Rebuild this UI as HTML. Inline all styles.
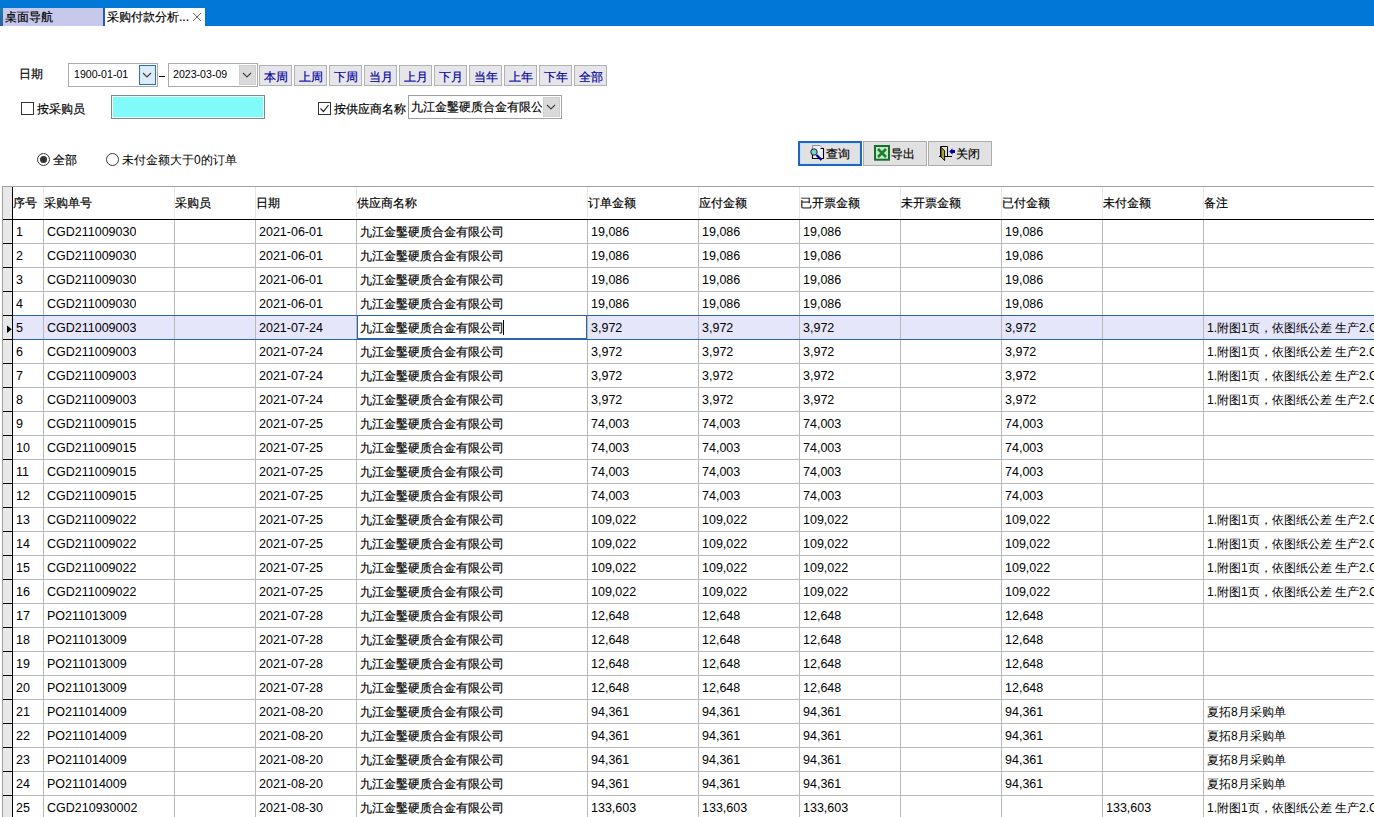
<!DOCTYPE html><html><head><meta charset="utf-8"><style>
*{box-sizing:border-box}
html,body{margin:0;padding:0;width:1374px;height:817px;overflow:hidden;background:#fff;font-family:"Liberation Sans",sans-serif;font-size:12px;color:#000}
.a{position:absolute}
.t{position:absolute;white-space:nowrap;line-height:14px;font-size:12px}
.btn{position:absolute;top:65px;width:33px;height:21px;background:#e5e5ea;border:1px solid #b2b2b2;color:#00009c;font-size:12px;line-height:22px;text-align:center}
.cb{position:absolute;width:13px;height:13px;border:1px solid #333;background:#fff}
.dp{position:absolute;top:63px;width:90px;height:24px;border:1px solid #ababab;background:#fff}
.hl{position:absolute;left:3px;width:1371px;height:1px;background:#b9b9b9}
.il{position:absolute;left:3px;width:9px;height:1px;background:#000}
.vl{position:absolute;top:220px;width:1px;height:597px;background:#b9b9b9}
.hv{position:absolute;top:187px;width:1px;height:32px;background:#e6e6e6}
.c{position:absolute;white-space:nowrap;line-height:14px;font-size:12px;color:#000;overflow:hidden}
.h{position:absolute;white-space:nowrap;line-height:14px;font-size:12px;color:#000;top:196px}
.b2{position:absolute;top:141px;height:25px;background:#e1e1e1;border:1px solid #adadad}
</style></head><body>
<div class="a" style="left:0;top:0;width:1374px;height:26px;background:#0078d7"></div>
<div class="a" style="left:0;top:8px;width:3px;height:18px;background:linear-gradient(#1f7fa8,#2d5fa4)"></div>
<div class="a" style="left:3px;top:8px;width:100px;height:18px;background:#c6c8ec"></div>
<div class="a" style="left:103px;top:8px;width:2px;height:18px;background:#1c5fa8"></div>
<div class="a" style="left:105px;top:8px;width:100px;height:18px;background:#fff"></div>
<div class="t" style="-webkit-text-stroke:0.18px currentColor;left:5px;top:10px">桌面导航</div>
<div class="t" style="-webkit-text-stroke:0.18px currentColor;left:107px;top:10px">采购付款分析...</div>
<svg class="a" style="left:192px;top:12px" width="10" height="10"><path d="M1 1L9 9M9 1L1 9" stroke="#666" stroke-width="1"/></svg>
<div class="t" style="-webkit-text-stroke:0.18px currentColor;left:19px;top:67px">日期</div>
<div class="dp" style="left:68px"></div>
<div class="t" style="left:74px;top:67px;font-size:10.6px">1900-01-01</div>
<div class="a" style="left:139px;top:65px;width:17px;height:20px;border:1px solid #2a6cc0;background:#dcecfa"></div>
<svg class="a" style="left:139px;top:66px" width="17" height="18"><path d="M4 7L8 11L12 7" fill="none" stroke="#444" stroke-width="1.2"/></svg>
<div class="a" style="left:159px;top:76px;width:6px;height:1px;background:#000"></div>
<div class="dp" style="left:168px"></div>
<div class="t" style="left:173px;top:67px;font-size:10.6px">2023-03-09</div>
<div class="a" style="left:239px;top:65px;width:17px;height:20px;border:1px solid #cfcfcf;background:#dadada"></div>
<svg class="a" style="left:239px;top:66px" width="17" height="18"><path d="M4 7L8 11L12 7" fill="none" stroke="#444" stroke-width="1.2"/></svg>
<div class="btn" style="-webkit-text-stroke:0.18px currentColor;left:259px">本周</div>
<div class="btn" style="-webkit-text-stroke:0.18px currentColor;left:294px">上周</div>
<div class="btn" style="-webkit-text-stroke:0.18px currentColor;left:329px">下周</div>
<div class="btn" style="-webkit-text-stroke:0.18px currentColor;left:364px">当月</div>
<div class="btn" style="-webkit-text-stroke:0.18px currentColor;left:399px">上月</div>
<div class="btn" style="-webkit-text-stroke:0.18px currentColor;left:434px">下月</div>
<div class="btn" style="-webkit-text-stroke:0.18px currentColor;left:469px">当年</div>
<div class="btn" style="-webkit-text-stroke:0.18px currentColor;left:504px">上年</div>
<div class="btn" style="-webkit-text-stroke:0.18px currentColor;left:539px">下年</div>
<div class="btn" style="-webkit-text-stroke:0.18px currentColor;left:574px">全部</div>
<div class="cb" style="left:21px;top:102px"></div>
<div class="t" style="-webkit-text-stroke:0.18px currentColor;left:37px;top:102px">按采购员</div>
<div class="a" style="left:111px;top:95px;width:154px;height:24px;border:1px solid #7d8a94;background:#80fafa;box-shadow:inset 0 0 0 1px #f4ffff"></div>
<div class="cb" style="left:318px;top:102px"></div>
<svg class="a" style="left:318px;top:102px" width="13" height="13"><path d="M2.5 6.5L5.5 9.5L10.5 3" fill="none" stroke="#222" stroke-width="1.2"/></svg>
<div class="t" style="-webkit-text-stroke:0.18px currentColor;left:334px;top:102px">按供应商名称</div>
<div class="a" style="left:408px;top:95px;width:154px;height:24px;border:1px solid #a0a0a0;background:#fff"></div>
<div class="c" style="-webkit-text-stroke:0.18px currentColor;left:411px;top:100px;width:131px">九江金鑿硬质合金有限公司</div>
<div class="a" style="left:543px;top:97px;width:17px;height:20px;border:1px solid #cfcfcf;background:#dadada"></div>
<svg class="a" style="left:543px;top:98px" width="17" height="18"><path d="M4 7L8 11L12 7" fill="none" stroke="#444" stroke-width="1.2"/></svg>
<svg class="a" style="left:36px;top:152px" width="15" height="15"><circle cx="7.5" cy="7.5" r="6" fill="#fff" stroke="#333" stroke-width="1"/><circle cx="7.5" cy="7.5" r="3.5" fill="#333"/></svg>
<div class="t" style="-webkit-text-stroke:0.18px currentColor;left:53px;top:153px">全部</div>
<svg class="a" style="left:105px;top:152px" width="15" height="15"><circle cx="7.5" cy="7.5" r="6" fill="#fff" stroke="#333" stroke-width="1"/></svg>
<div class="t" style="left:122px;top:153px">未付金额大于0的订单</div>
<div class="b2" style="left:798px;width:64px;border:2px solid #1f66bd;box-shadow:inset 0 0 0 1px #bfe0fb"></div>
<div class="b2" style="left:863px;width:64px"></div>
<div class="b2" style="left:928px;width:64px"></div>
<svg class="a" style="left:806px;top:142px" width="22" height="22"><path d="M6.5 3.5H14L17.5 7V16.5H6.5Z" fill="#eeeefa" stroke="#888" stroke-width="0.9"/><path d="M14.5 6.5H17.5V16.5H6.5V13" fill="none" stroke="#000" stroke-width="1.1"/><path d="M10.5 13L15.5 18" stroke="#0000a8" stroke-width="2.3"/><circle cx="8" cy="10" r="3.2" fill="#72d8c6" stroke="#111" stroke-width="0.9"/></svg>
<div class="t" style="-webkit-text-stroke:0.18px currentColor;left:826px;top:147px">查询</div>
<svg class="a" style="left:871px;top:142px" width="22" height="22"><rect x="4" y="4" width="14" height="13.7" fill="#bdf0bd" stroke="#1d6b30" stroke-width="2"/><path d="M7 7L15 15M15 7L7 15" stroke="#247a38" stroke-width="2.6"/></svg>
<div class="t" style="-webkit-text-stroke:0.18px currentColor;left:891px;top:147px">导出</div>
<svg class="a" style="left:936px;top:142px" width="22" height="22"><path d="M4.5 14.5V4.5H11.5V14.5" fill="none" stroke="#000" stroke-width="1"/><path d="M3 14.5H16" stroke="#000" stroke-width="1"/><path d="M5 5.5L8.6 8.5V18.5L5 15Z" fill="#a4a432" stroke="#000" stroke-width="0.9"/><path d="M13.2 9.5L16.5 6.2V8H19V11H16.5V12.8Z" fill="#0000b0"/></svg>
<div class="t" style="-webkit-text-stroke:0.18px currentColor;left:956px;top:147px">关闭</div>
<div class="a" style="left:2px;top:186px;width:1372px;height:1px;background:#a0a0a0"></div>
<div class="a" style="left:2px;top:186px;width:1px;height:631px;background:#a0a0a0"></div>
<div class="a" style="left:3px;top:187px;width:9px;height:630px;background:#e8e8e8"></div>
<div class="a" style="left:13px;top:315px;width:1361px;height:24px;background:#e6e6fa"></div>
<div class="hv" style="left:43px"></div>
<div class="hv" style="left:174px"></div>
<div class="hv" style="left:255px"></div>
<div class="hv" style="left:356px"></div>
<div class="hv" style="left:587px"></div>
<div class="hv" style="left:698px"></div>
<div class="hv" style="left:799px"></div>
<div class="hv" style="left:900px"></div>
<div class="hv" style="left:1001px"></div>
<div class="hv" style="left:1102px"></div>
<div class="hv" style="left:1203px"></div>
<div class="vl" style="left:43px"></div>
<div class="vl" style="left:174px"></div>
<div class="vl" style="left:255px"></div>
<div class="vl" style="left:356px"></div>
<div class="vl" style="left:587px"></div>
<div class="vl" style="left:698px"></div>
<div class="vl" style="left:799px"></div>
<div class="vl" style="left:900px"></div>
<div class="vl" style="left:1001px"></div>
<div class="vl" style="left:1102px"></div>
<div class="vl" style="left:1203px"></div>
<div class="hl" style="left:13px;top:243px"></div>
<div class="hl" style="left:13px;top:267px"></div>
<div class="hl" style="left:13px;top:291px"></div>
<div class="hl" style="left:13px;top:315px"></div>
<div class="hl" style="left:13px;top:339px"></div>
<div class="hl" style="left:13px;top:363px"></div>
<div class="hl" style="left:13px;top:387px"></div>
<div class="hl" style="left:13px;top:411px"></div>
<div class="hl" style="left:13px;top:435px"></div>
<div class="hl" style="left:13px;top:459px"></div>
<div class="hl" style="left:13px;top:483px"></div>
<div class="hl" style="left:13px;top:507px"></div>
<div class="hl" style="left:13px;top:531px"></div>
<div class="hl" style="left:13px;top:555px"></div>
<div class="hl" style="left:13px;top:579px"></div>
<div class="hl" style="left:13px;top:603px"></div>
<div class="hl" style="left:13px;top:627px"></div>
<div class="hl" style="left:13px;top:651px"></div>
<div class="hl" style="left:13px;top:675px"></div>
<div class="hl" style="left:13px;top:699px"></div>
<div class="hl" style="left:13px;top:723px"></div>
<div class="hl" style="left:13px;top:747px"></div>
<div class="hl" style="left:13px;top:771px"></div>
<div class="hl" style="left:13px;top:795px"></div>
<div class="il" style="top:219px"></div>
<div class="il" style="top:243px"></div>
<div class="il" style="top:267px"></div>
<div class="il" style="top:291px"></div>
<div class="il" style="top:315px"></div>
<div class="il" style="top:339px"></div>
<div class="il" style="top:363px"></div>
<div class="il" style="top:387px"></div>
<div class="il" style="top:411px"></div>
<div class="il" style="top:435px"></div>
<div class="il" style="top:459px"></div>
<div class="il" style="top:483px"></div>
<div class="il" style="top:507px"></div>
<div class="il" style="top:531px"></div>
<div class="il" style="top:555px"></div>
<div class="il" style="top:579px"></div>
<div class="il" style="top:603px"></div>
<div class="il" style="top:627px"></div>
<div class="il" style="top:651px"></div>
<div class="il" style="top:675px"></div>
<div class="il" style="top:699px"></div>
<div class="il" style="top:723px"></div>
<div class="il" style="top:747px"></div>
<div class="il" style="top:771px"></div>
<div class="il" style="top:795px"></div>
<div class="a" style="left:12px;top:219px;width:1362px;height:1px;background:#000"></div>
<div class="a" style="left:12px;top:187px;width:1px;height:630px;background:#000"></div>
<div class="a" style="left:13px;top:315px;width:1361px;height:1px;background:#2a66b0"></div>
<div class="a" style="left:13px;top:339px;width:1361px;height:1px;background:#2a66b0"></div>
<div class="a" style="left:357px;top:315px;width:230px;height:24px;border:1px solid #2a66b0;background:#fff"></div>
<div class="a" style="left:503px;top:320px;width:1px;height:15px;background:#000"></div>
<svg class="a" style="left:6px;top:325px" width="7" height="9"><path d="M1 0.5L5.8 4.2L1 7.9Z" fill="#000"/></svg>
<div class="h" style="-webkit-text-stroke:0.18px currentColor;left:13px">序号</div>
<div class="h" style="-webkit-text-stroke:0.18px currentColor;left:44px">采购单号</div>
<div class="h" style="-webkit-text-stroke:0.18px currentColor;left:175px">采购员</div>
<div class="h" style="-webkit-text-stroke:0.18px currentColor;left:256px">日期</div>
<div class="h" style="-webkit-text-stroke:0.18px currentColor;left:357px">供应商名称</div>
<div class="h" style="-webkit-text-stroke:0.18px currentColor;left:588px">订单金额</div>
<div class="h" style="-webkit-text-stroke:0.18px currentColor;left:699px">应付金额</div>
<div class="h" style="-webkit-text-stroke:0.18px currentColor;left:800px">已开票金额</div>
<div class="h" style="-webkit-text-stroke:0.18px currentColor;left:901px">未开票金额</div>
<div class="h" style="-webkit-text-stroke:0.18px currentColor;left:1002px">已付金额</div>
<div class="h" style="-webkit-text-stroke:0.18px currentColor;left:1103px">未付金额</div>
<div class="h" style="-webkit-text-stroke:0.18px currentColor;left:1204px">备注</div>
<div class="c" style="left:16px;top:225px;max-width:26px;font-size:12.5px">1</div>
<div class="c" style="left:47px;top:225px;max-width:126px;font-size:12.5px">CGD211009030</div>
<div class="c" style="left:259px;top:225px;max-width:96px;font-size:12.5px">2021-06-01</div>
<div class="c" style="-webkit-text-stroke:0.18px currentColor;left:360px;top:225px;max-width:226px;font-size:12px">九江金鑿硬质合金有限公司</div>
<div class="c" style="left:591px;top:225px;max-width:106px;font-size:12.5px">19,086</div>
<div class="c" style="left:702px;top:225px;max-width:96px;font-size:12.5px">19,086</div>
<div class="c" style="left:803px;top:225px;max-width:96px;font-size:12.5px">19,086</div>
<div class="c" style="left:1005px;top:225px;max-width:96px;font-size:12.5px">19,086</div>
<div class="c" style="left:16px;top:249px;max-width:26px;font-size:12.5px">2</div>
<div class="c" style="left:47px;top:249px;max-width:126px;font-size:12.5px">CGD211009030</div>
<div class="c" style="left:259px;top:249px;max-width:96px;font-size:12.5px">2021-06-01</div>
<div class="c" style="-webkit-text-stroke:0.18px currentColor;left:360px;top:249px;max-width:226px;font-size:12px">九江金鑿硬质合金有限公司</div>
<div class="c" style="left:591px;top:249px;max-width:106px;font-size:12.5px">19,086</div>
<div class="c" style="left:702px;top:249px;max-width:96px;font-size:12.5px">19,086</div>
<div class="c" style="left:803px;top:249px;max-width:96px;font-size:12.5px">19,086</div>
<div class="c" style="left:1005px;top:249px;max-width:96px;font-size:12.5px">19,086</div>
<div class="c" style="left:16px;top:273px;max-width:26px;font-size:12.5px">3</div>
<div class="c" style="left:47px;top:273px;max-width:126px;font-size:12.5px">CGD211009030</div>
<div class="c" style="left:259px;top:273px;max-width:96px;font-size:12.5px">2021-06-01</div>
<div class="c" style="-webkit-text-stroke:0.18px currentColor;left:360px;top:273px;max-width:226px;font-size:12px">九江金鑿硬质合金有限公司</div>
<div class="c" style="left:591px;top:273px;max-width:106px;font-size:12.5px">19,086</div>
<div class="c" style="left:702px;top:273px;max-width:96px;font-size:12.5px">19,086</div>
<div class="c" style="left:803px;top:273px;max-width:96px;font-size:12.5px">19,086</div>
<div class="c" style="left:1005px;top:273px;max-width:96px;font-size:12.5px">19,086</div>
<div class="c" style="left:16px;top:297px;max-width:26px;font-size:12.5px">4</div>
<div class="c" style="left:47px;top:297px;max-width:126px;font-size:12.5px">CGD211009030</div>
<div class="c" style="left:259px;top:297px;max-width:96px;font-size:12.5px">2021-06-01</div>
<div class="c" style="-webkit-text-stroke:0.18px currentColor;left:360px;top:297px;max-width:226px;font-size:12px">九江金鑿硬质合金有限公司</div>
<div class="c" style="left:591px;top:297px;max-width:106px;font-size:12.5px">19,086</div>
<div class="c" style="left:702px;top:297px;max-width:96px;font-size:12.5px">19,086</div>
<div class="c" style="left:803px;top:297px;max-width:96px;font-size:12.5px">19,086</div>
<div class="c" style="left:1005px;top:297px;max-width:96px;font-size:12.5px">19,086</div>
<div class="c" style="left:16px;top:321px;max-width:26px;font-size:12.5px">5</div>
<div class="c" style="left:47px;top:321px;max-width:126px;font-size:12.5px">CGD211009003</div>
<div class="c" style="left:259px;top:321px;max-width:96px;font-size:12.5px">2021-07-24</div>
<div class="c" style="-webkit-text-stroke:0.18px currentColor;left:360px;top:321px;max-width:226px;font-size:12px">九江金鑿硬质合金有限公司</div>
<div class="c" style="left:591px;top:321px;max-width:106px;font-size:12.5px">3,972</div>
<div class="c" style="left:702px;top:321px;max-width:96px;font-size:12.5px">3,972</div>
<div class="c" style="left:803px;top:321px;max-width:96px;font-size:12.5px">3,972</div>
<div class="c" style="left:1005px;top:321px;max-width:96px;font-size:12.5px">3,972</div>
<div class="c" style="left:1207px;top:321px;max-width:192px;font-size:12px">1.附图1页，依图纸公差 生产2.GB</div>
<div class="c" style="left:16px;top:345px;max-width:26px;font-size:12.5px">6</div>
<div class="c" style="left:47px;top:345px;max-width:126px;font-size:12.5px">CGD211009003</div>
<div class="c" style="left:259px;top:345px;max-width:96px;font-size:12.5px">2021-07-24</div>
<div class="c" style="-webkit-text-stroke:0.18px currentColor;left:360px;top:345px;max-width:226px;font-size:12px">九江金鑿硬质合金有限公司</div>
<div class="c" style="left:591px;top:345px;max-width:106px;font-size:12.5px">3,972</div>
<div class="c" style="left:702px;top:345px;max-width:96px;font-size:12.5px">3,972</div>
<div class="c" style="left:803px;top:345px;max-width:96px;font-size:12.5px">3,972</div>
<div class="c" style="left:1005px;top:345px;max-width:96px;font-size:12.5px">3,972</div>
<div class="c" style="left:1207px;top:345px;max-width:192px;font-size:12px">1.附图1页，依图纸公差 生产2.GB</div>
<div class="c" style="left:16px;top:369px;max-width:26px;font-size:12.5px">7</div>
<div class="c" style="left:47px;top:369px;max-width:126px;font-size:12.5px">CGD211009003</div>
<div class="c" style="left:259px;top:369px;max-width:96px;font-size:12.5px">2021-07-24</div>
<div class="c" style="-webkit-text-stroke:0.18px currentColor;left:360px;top:369px;max-width:226px;font-size:12px">九江金鑿硬质合金有限公司</div>
<div class="c" style="left:591px;top:369px;max-width:106px;font-size:12.5px">3,972</div>
<div class="c" style="left:702px;top:369px;max-width:96px;font-size:12.5px">3,972</div>
<div class="c" style="left:803px;top:369px;max-width:96px;font-size:12.5px">3,972</div>
<div class="c" style="left:1005px;top:369px;max-width:96px;font-size:12.5px">3,972</div>
<div class="c" style="left:1207px;top:369px;max-width:192px;font-size:12px">1.附图1页，依图纸公差 生产2.GB</div>
<div class="c" style="left:16px;top:393px;max-width:26px;font-size:12.5px">8</div>
<div class="c" style="left:47px;top:393px;max-width:126px;font-size:12.5px">CGD211009003</div>
<div class="c" style="left:259px;top:393px;max-width:96px;font-size:12.5px">2021-07-24</div>
<div class="c" style="-webkit-text-stroke:0.18px currentColor;left:360px;top:393px;max-width:226px;font-size:12px">九江金鑿硬质合金有限公司</div>
<div class="c" style="left:591px;top:393px;max-width:106px;font-size:12.5px">3,972</div>
<div class="c" style="left:702px;top:393px;max-width:96px;font-size:12.5px">3,972</div>
<div class="c" style="left:803px;top:393px;max-width:96px;font-size:12.5px">3,972</div>
<div class="c" style="left:1005px;top:393px;max-width:96px;font-size:12.5px">3,972</div>
<div class="c" style="left:1207px;top:393px;max-width:192px;font-size:12px">1.附图1页，依图纸公差 生产2.GB</div>
<div class="c" style="left:16px;top:417px;max-width:26px;font-size:12.5px">9</div>
<div class="c" style="left:47px;top:417px;max-width:126px;font-size:12.5px">CGD211009015</div>
<div class="c" style="left:259px;top:417px;max-width:96px;font-size:12.5px">2021-07-25</div>
<div class="c" style="-webkit-text-stroke:0.18px currentColor;left:360px;top:417px;max-width:226px;font-size:12px">九江金鑿硬质合金有限公司</div>
<div class="c" style="left:591px;top:417px;max-width:106px;font-size:12.5px">74,003</div>
<div class="c" style="left:702px;top:417px;max-width:96px;font-size:12.5px">74,003</div>
<div class="c" style="left:803px;top:417px;max-width:96px;font-size:12.5px">74,003</div>
<div class="c" style="left:1005px;top:417px;max-width:96px;font-size:12.5px">74,003</div>
<div class="c" style="left:16px;top:441px;max-width:26px;font-size:12.5px">10</div>
<div class="c" style="left:47px;top:441px;max-width:126px;font-size:12.5px">CGD211009015</div>
<div class="c" style="left:259px;top:441px;max-width:96px;font-size:12.5px">2021-07-25</div>
<div class="c" style="-webkit-text-stroke:0.18px currentColor;left:360px;top:441px;max-width:226px;font-size:12px">九江金鑿硬质合金有限公司</div>
<div class="c" style="left:591px;top:441px;max-width:106px;font-size:12.5px">74,003</div>
<div class="c" style="left:702px;top:441px;max-width:96px;font-size:12.5px">74,003</div>
<div class="c" style="left:803px;top:441px;max-width:96px;font-size:12.5px">74,003</div>
<div class="c" style="left:1005px;top:441px;max-width:96px;font-size:12.5px">74,003</div>
<div class="c" style="left:16px;top:465px;max-width:26px;font-size:12.5px">11</div>
<div class="c" style="left:47px;top:465px;max-width:126px;font-size:12.5px">CGD211009015</div>
<div class="c" style="left:259px;top:465px;max-width:96px;font-size:12.5px">2021-07-25</div>
<div class="c" style="-webkit-text-stroke:0.18px currentColor;left:360px;top:465px;max-width:226px;font-size:12px">九江金鑿硬质合金有限公司</div>
<div class="c" style="left:591px;top:465px;max-width:106px;font-size:12.5px">74,003</div>
<div class="c" style="left:702px;top:465px;max-width:96px;font-size:12.5px">74,003</div>
<div class="c" style="left:803px;top:465px;max-width:96px;font-size:12.5px">74,003</div>
<div class="c" style="left:1005px;top:465px;max-width:96px;font-size:12.5px">74,003</div>
<div class="c" style="left:16px;top:489px;max-width:26px;font-size:12.5px">12</div>
<div class="c" style="left:47px;top:489px;max-width:126px;font-size:12.5px">CGD211009015</div>
<div class="c" style="left:259px;top:489px;max-width:96px;font-size:12.5px">2021-07-25</div>
<div class="c" style="-webkit-text-stroke:0.18px currentColor;left:360px;top:489px;max-width:226px;font-size:12px">九江金鑿硬质合金有限公司</div>
<div class="c" style="left:591px;top:489px;max-width:106px;font-size:12.5px">74,003</div>
<div class="c" style="left:702px;top:489px;max-width:96px;font-size:12.5px">74,003</div>
<div class="c" style="left:803px;top:489px;max-width:96px;font-size:12.5px">74,003</div>
<div class="c" style="left:1005px;top:489px;max-width:96px;font-size:12.5px">74,003</div>
<div class="c" style="left:16px;top:513px;max-width:26px;font-size:12.5px">13</div>
<div class="c" style="left:47px;top:513px;max-width:126px;font-size:12.5px">CGD211009022</div>
<div class="c" style="left:259px;top:513px;max-width:96px;font-size:12.5px">2021-07-25</div>
<div class="c" style="-webkit-text-stroke:0.18px currentColor;left:360px;top:513px;max-width:226px;font-size:12px">九江金鑿硬质合金有限公司</div>
<div class="c" style="left:591px;top:513px;max-width:106px;font-size:12.5px">109,022</div>
<div class="c" style="left:702px;top:513px;max-width:96px;font-size:12.5px">109,022</div>
<div class="c" style="left:803px;top:513px;max-width:96px;font-size:12.5px">109,022</div>
<div class="c" style="left:1005px;top:513px;max-width:96px;font-size:12.5px">109,022</div>
<div class="c" style="left:1207px;top:513px;max-width:192px;font-size:12px">1.附图1页，依图纸公差 生产2.GB</div>
<div class="c" style="left:16px;top:537px;max-width:26px;font-size:12.5px">14</div>
<div class="c" style="left:47px;top:537px;max-width:126px;font-size:12.5px">CGD211009022</div>
<div class="c" style="left:259px;top:537px;max-width:96px;font-size:12.5px">2021-07-25</div>
<div class="c" style="-webkit-text-stroke:0.18px currentColor;left:360px;top:537px;max-width:226px;font-size:12px">九江金鑿硬质合金有限公司</div>
<div class="c" style="left:591px;top:537px;max-width:106px;font-size:12.5px">109,022</div>
<div class="c" style="left:702px;top:537px;max-width:96px;font-size:12.5px">109,022</div>
<div class="c" style="left:803px;top:537px;max-width:96px;font-size:12.5px">109,022</div>
<div class="c" style="left:1005px;top:537px;max-width:96px;font-size:12.5px">109,022</div>
<div class="c" style="left:1207px;top:537px;max-width:192px;font-size:12px">1.附图1页，依图纸公差 生产2.GB</div>
<div class="c" style="left:16px;top:561px;max-width:26px;font-size:12.5px">15</div>
<div class="c" style="left:47px;top:561px;max-width:126px;font-size:12.5px">CGD211009022</div>
<div class="c" style="left:259px;top:561px;max-width:96px;font-size:12.5px">2021-07-25</div>
<div class="c" style="-webkit-text-stroke:0.18px currentColor;left:360px;top:561px;max-width:226px;font-size:12px">九江金鑿硬质合金有限公司</div>
<div class="c" style="left:591px;top:561px;max-width:106px;font-size:12.5px">109,022</div>
<div class="c" style="left:702px;top:561px;max-width:96px;font-size:12.5px">109,022</div>
<div class="c" style="left:803px;top:561px;max-width:96px;font-size:12.5px">109,022</div>
<div class="c" style="left:1005px;top:561px;max-width:96px;font-size:12.5px">109,022</div>
<div class="c" style="left:1207px;top:561px;max-width:192px;font-size:12px">1.附图1页，依图纸公差 生产2.GB</div>
<div class="c" style="left:16px;top:585px;max-width:26px;font-size:12.5px">16</div>
<div class="c" style="left:47px;top:585px;max-width:126px;font-size:12.5px">CGD211009022</div>
<div class="c" style="left:259px;top:585px;max-width:96px;font-size:12.5px">2021-07-25</div>
<div class="c" style="-webkit-text-stroke:0.18px currentColor;left:360px;top:585px;max-width:226px;font-size:12px">九江金鑿硬质合金有限公司</div>
<div class="c" style="left:591px;top:585px;max-width:106px;font-size:12.5px">109,022</div>
<div class="c" style="left:702px;top:585px;max-width:96px;font-size:12.5px">109,022</div>
<div class="c" style="left:803px;top:585px;max-width:96px;font-size:12.5px">109,022</div>
<div class="c" style="left:1005px;top:585px;max-width:96px;font-size:12.5px">109,022</div>
<div class="c" style="left:1207px;top:585px;max-width:192px;font-size:12px">1.附图1页，依图纸公差 生产2.GB</div>
<div class="c" style="left:16px;top:609px;max-width:26px;font-size:12.5px">17</div>
<div class="c" style="left:47px;top:609px;max-width:126px;font-size:12.5px">PO211013009</div>
<div class="c" style="left:259px;top:609px;max-width:96px;font-size:12.5px">2021-07-28</div>
<div class="c" style="-webkit-text-stroke:0.18px currentColor;left:360px;top:609px;max-width:226px;font-size:12px">九江金鑿硬质合金有限公司</div>
<div class="c" style="left:591px;top:609px;max-width:106px;font-size:12.5px">12,648</div>
<div class="c" style="left:702px;top:609px;max-width:96px;font-size:12.5px">12,648</div>
<div class="c" style="left:803px;top:609px;max-width:96px;font-size:12.5px">12,648</div>
<div class="c" style="left:1005px;top:609px;max-width:96px;font-size:12.5px">12,648</div>
<div class="c" style="left:16px;top:633px;max-width:26px;font-size:12.5px">18</div>
<div class="c" style="left:47px;top:633px;max-width:126px;font-size:12.5px">PO211013009</div>
<div class="c" style="left:259px;top:633px;max-width:96px;font-size:12.5px">2021-07-28</div>
<div class="c" style="-webkit-text-stroke:0.18px currentColor;left:360px;top:633px;max-width:226px;font-size:12px">九江金鑿硬质合金有限公司</div>
<div class="c" style="left:591px;top:633px;max-width:106px;font-size:12.5px">12,648</div>
<div class="c" style="left:702px;top:633px;max-width:96px;font-size:12.5px">12,648</div>
<div class="c" style="left:803px;top:633px;max-width:96px;font-size:12.5px">12,648</div>
<div class="c" style="left:1005px;top:633px;max-width:96px;font-size:12.5px">12,648</div>
<div class="c" style="left:16px;top:657px;max-width:26px;font-size:12.5px">19</div>
<div class="c" style="left:47px;top:657px;max-width:126px;font-size:12.5px">PO211013009</div>
<div class="c" style="left:259px;top:657px;max-width:96px;font-size:12.5px">2021-07-28</div>
<div class="c" style="-webkit-text-stroke:0.18px currentColor;left:360px;top:657px;max-width:226px;font-size:12px">九江金鑿硬质合金有限公司</div>
<div class="c" style="left:591px;top:657px;max-width:106px;font-size:12.5px">12,648</div>
<div class="c" style="left:702px;top:657px;max-width:96px;font-size:12.5px">12,648</div>
<div class="c" style="left:803px;top:657px;max-width:96px;font-size:12.5px">12,648</div>
<div class="c" style="left:1005px;top:657px;max-width:96px;font-size:12.5px">12,648</div>
<div class="c" style="left:16px;top:681px;max-width:26px;font-size:12.5px">20</div>
<div class="c" style="left:47px;top:681px;max-width:126px;font-size:12.5px">PO211013009</div>
<div class="c" style="left:259px;top:681px;max-width:96px;font-size:12.5px">2021-07-28</div>
<div class="c" style="-webkit-text-stroke:0.18px currentColor;left:360px;top:681px;max-width:226px;font-size:12px">九江金鑿硬质合金有限公司</div>
<div class="c" style="left:591px;top:681px;max-width:106px;font-size:12.5px">12,648</div>
<div class="c" style="left:702px;top:681px;max-width:96px;font-size:12.5px">12,648</div>
<div class="c" style="left:803px;top:681px;max-width:96px;font-size:12.5px">12,648</div>
<div class="c" style="left:1005px;top:681px;max-width:96px;font-size:12.5px">12,648</div>
<div class="c" style="left:16px;top:705px;max-width:26px;font-size:12.5px">21</div>
<div class="c" style="left:47px;top:705px;max-width:126px;font-size:12.5px">PO211014009</div>
<div class="c" style="left:259px;top:705px;max-width:96px;font-size:12.5px">2021-08-20</div>
<div class="c" style="-webkit-text-stroke:0.18px currentColor;left:360px;top:705px;max-width:226px;font-size:12px">九江金鑿硬质合金有限公司</div>
<div class="c" style="left:591px;top:705px;max-width:106px;font-size:12.5px">94,361</div>
<div class="c" style="left:702px;top:705px;max-width:96px;font-size:12.5px">94,361</div>
<div class="c" style="left:803px;top:705px;max-width:96px;font-size:12.5px">94,361</div>
<div class="c" style="left:1005px;top:705px;max-width:96px;font-size:12.5px">94,361</div>
<div class="c" style="left:1207px;top:705px;max-width:192px;font-size:12px">夏拓8月采购单</div>
<div class="c" style="left:16px;top:729px;max-width:26px;font-size:12.5px">22</div>
<div class="c" style="left:47px;top:729px;max-width:126px;font-size:12.5px">PO211014009</div>
<div class="c" style="left:259px;top:729px;max-width:96px;font-size:12.5px">2021-08-20</div>
<div class="c" style="-webkit-text-stroke:0.18px currentColor;left:360px;top:729px;max-width:226px;font-size:12px">九江金鑿硬质合金有限公司</div>
<div class="c" style="left:591px;top:729px;max-width:106px;font-size:12.5px">94,361</div>
<div class="c" style="left:702px;top:729px;max-width:96px;font-size:12.5px">94,361</div>
<div class="c" style="left:803px;top:729px;max-width:96px;font-size:12.5px">94,361</div>
<div class="c" style="left:1005px;top:729px;max-width:96px;font-size:12.5px">94,361</div>
<div class="c" style="left:1207px;top:729px;max-width:192px;font-size:12px">夏拓8月采购单</div>
<div class="c" style="left:16px;top:753px;max-width:26px;font-size:12.5px">23</div>
<div class="c" style="left:47px;top:753px;max-width:126px;font-size:12.5px">PO211014009</div>
<div class="c" style="left:259px;top:753px;max-width:96px;font-size:12.5px">2021-08-20</div>
<div class="c" style="-webkit-text-stroke:0.18px currentColor;left:360px;top:753px;max-width:226px;font-size:12px">九江金鑿硬质合金有限公司</div>
<div class="c" style="left:591px;top:753px;max-width:106px;font-size:12.5px">94,361</div>
<div class="c" style="left:702px;top:753px;max-width:96px;font-size:12.5px">94,361</div>
<div class="c" style="left:803px;top:753px;max-width:96px;font-size:12.5px">94,361</div>
<div class="c" style="left:1005px;top:753px;max-width:96px;font-size:12.5px">94,361</div>
<div class="c" style="left:1207px;top:753px;max-width:192px;font-size:12px">夏拓8月采购单</div>
<div class="c" style="left:16px;top:777px;max-width:26px;font-size:12.5px">24</div>
<div class="c" style="left:47px;top:777px;max-width:126px;font-size:12.5px">PO211014009</div>
<div class="c" style="left:259px;top:777px;max-width:96px;font-size:12.5px">2021-08-20</div>
<div class="c" style="-webkit-text-stroke:0.18px currentColor;left:360px;top:777px;max-width:226px;font-size:12px">九江金鑿硬质合金有限公司</div>
<div class="c" style="left:591px;top:777px;max-width:106px;font-size:12.5px">94,361</div>
<div class="c" style="left:702px;top:777px;max-width:96px;font-size:12.5px">94,361</div>
<div class="c" style="left:803px;top:777px;max-width:96px;font-size:12.5px">94,361</div>
<div class="c" style="left:1005px;top:777px;max-width:96px;font-size:12.5px">94,361</div>
<div class="c" style="left:1207px;top:777px;max-width:192px;font-size:12px">夏拓8月采购单</div>
<div class="c" style="left:16px;top:801px;max-width:26px;font-size:12.5px">25</div>
<div class="c" style="left:47px;top:801px;max-width:126px;font-size:12.5px">CGD210930002</div>
<div class="c" style="left:259px;top:801px;max-width:96px;font-size:12.5px">2021-08-30</div>
<div class="c" style="-webkit-text-stroke:0.18px currentColor;left:360px;top:801px;max-width:226px;font-size:12px">九江金鑿硬质合金有限公司</div>
<div class="c" style="left:591px;top:801px;max-width:106px;font-size:12.5px">133,603</div>
<div class="c" style="left:702px;top:801px;max-width:96px;font-size:12.5px">133,603</div>
<div class="c" style="left:803px;top:801px;max-width:96px;font-size:12.5px">133,603</div>
<div class="c" style="left:1106px;top:801px;max-width:96px;font-size:12.5px">133,603</div>
<div class="c" style="left:1207px;top:801px;max-width:192px;font-size:12px">1.附图1页，依图纸公差 生产2.GB</div>
</body></html>
